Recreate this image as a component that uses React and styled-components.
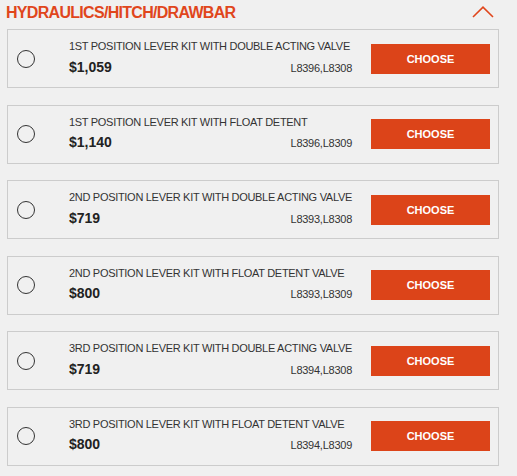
import React from 'react';
import styled, { createGlobalStyle } from 'styled-components';

const GlobalStyle = createGlobalStyle`
  body {
    margin: 0;
    background: #f0f0f0;
    font-family: "Liberation Sans", Arial, sans-serif;
  }
`;

const kits = [
  { name: '1ST POSITION LEVER KIT WITH DOUBLE ACTING VALVE', price: '$1,059', codes: 'L8396,L8308' },
  { name: '1ST POSITION LEVER KIT WITH FLOAT DETENT', price: '$1,140', codes: 'L8396,L8309' },
  { name: '2ND POSITION LEVER KIT WITH DOUBLE ACTING VALVE', price: '$719', codes: 'L8393,L8308' },
  { name: '2ND POSITION LEVER KIT WITH FLOAT DETENT VALVE', price: '$800', codes: 'L8393,L8309' },
  { name: '3RD POSITION LEVER KIT WITH DOUBLE ACTING VALVE', price: '$719', codes: 'L8394,L8308' },
  { name: '3RD POSITION LEVER KIT WITH FLOAT DETENT VALVE', price: '$800', codes: 'L8394,L8309' },
];

const Section = styled.section`
  width: 517px;
  min-height: 476px;
  background: #f0f0f0;
`;

const Header = styled.div`
  display: flex;
  align-items: center;
  justify-content: space-between;
  padding: 3px 23px 0 6px;
  height: 20px;
`;

const Title = styled.h2`
  margin: 0;
  font-size: 16px;
  line-height: 20px;
  font-weight: 700;
  letter-spacing: -0.7px;
  color: #e0461c;
`;

const Toggle = styled.svg`
  display: block;
  margin-top: -3px;
`;

const List = styled.div`
  display: flex;
  flex-direction: column;
  gap: 16.5px;
  padding: 6px 0 0 7px;
`;

const Card = styled.label`
  box-sizing: border-box;
  width: 492px;
  height: 59px;
  border: 1px solid #cccccc;
  display: flex;
  align-items: center;
  padding: 0 8px 0 9px;
  cursor: pointer;
`;

const Radio = styled.span`
  box-sizing: border-box;
  width: 18px;
  height: 18px;
  border-radius: 50%;
  border: 1.5px solid #333;
  flex: none;
`;

const Info = styled.div`
  flex: none;
  width: 283px;
  margin: -2px 19px 0 34px;
  display: flex;
  flex-direction: column;
  gap: 4.5px;
`;

const Name = styled.div`
  font-size: 11px;
  line-height: 14px;
  letter-spacing: -0.3px;
  color: #333;
  white-space: nowrap;
`;

const PriceRow = styled.div`
  display: flex;
  align-items: baseline;
  justify-content: space-between;
`;

const Price = styled.span`
  font-size: 14px;
  line-height: 18px;
  font-weight: 700;
  color: #222;
`;

const Codes = styled.span`
  font-size: 11px;
  letter-spacing: -0.25px;
  color: #333;
`;

const ChooseButton = styled.button`
  width: 119px;
  height: 30px;
  border: none;
  border-radius: 0;
  background: #dc4419;
  color: #fff;
  font-family: inherit;
  font-size: 11px;
  font-weight: 700;
  padding: 0;
  cursor: pointer;
  flex: none;
`;

export default function App() {
  return (
    <Section>
      <GlobalStyle />
      <Header>
        <Title>HYDRAULICS/HITCH/DRAWBAR</Title>
        <Toggle width="22" height="12" viewBox="0 0 22 12">
          <path d="M1 11 L11 1.2 L21 11" fill="none" stroke="#e0461c" strokeWidth="1.6" />
        </Toggle>
      </Header>
      <List>
        {kits.map((kit) => (
          <Card key={kit.name}>
            <Radio />
            <Info>
              <Name>{kit.name}</Name>
              <PriceRow>
                <Price>{kit.price}</Price>
                <Codes>{kit.codes}</Codes>
              </PriceRow>
            </Info>
            <ChooseButton>CHOOSE</ChooseButton>
          </Card>
        ))}
      </List>
    </Section>
  );
}
